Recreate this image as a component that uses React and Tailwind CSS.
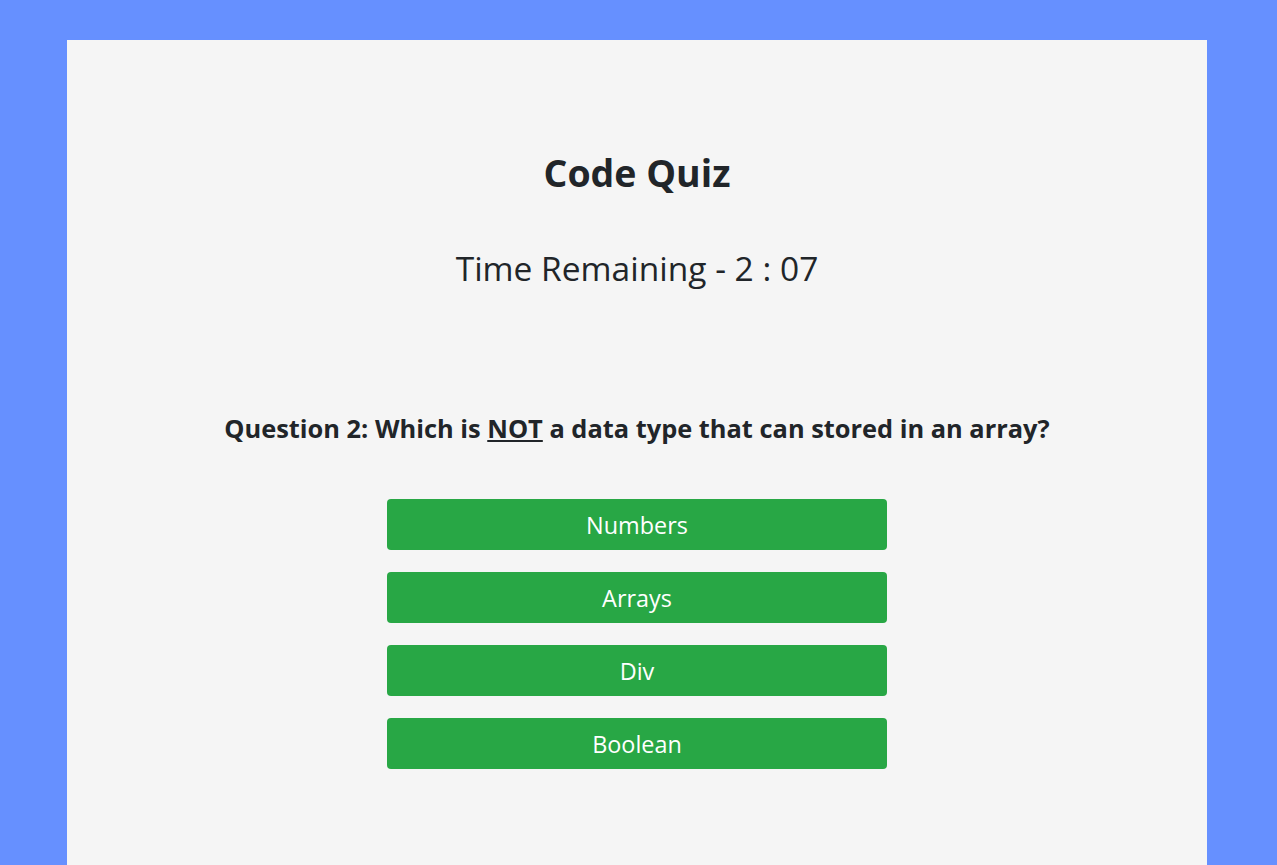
export default function App() {
  const answers = ["Numbers", "Arrays", "Div", "Boolean"];

  return (
    <div
      className="h-screen overflow-hidden bg-[#6690ff] pt-10 text-[#212529]"
      style={{ fontFamily: '"Open Sans", "Noto Sans", sans-serif' }}
    >
      <div className="ml-[67px] h-[825px] w-[1140px] bg-[#f5f5f5] pt-[108px] text-center">
        <h1 className="text-[37.5px] font-bold leading-[50px]">Code Quiz</h1>
        <h2 className="mt-[45px] text-[33.5px] leading-[50px]">Time Remaining - 2 : 07</h2>

        <h4 className="mt-[117px] text-[25.4px] font-bold leading-[36px]">
          Question 2: Which is <u>NOT</u> a data type that can stored in an array?
        </h4>

        <div className="mt-[53px] flex flex-col items-center gap-[22px]">
          {answers.map((a) => (
            <button
              key={a}
              className="h-[51px] w-[500px] rounded bg-[#28a745] pt-[3px] text-[23.4px] text-white"
            >
              {a}
            </button>
          ))}
        </div>
      </div>
    </div>
  );
}
